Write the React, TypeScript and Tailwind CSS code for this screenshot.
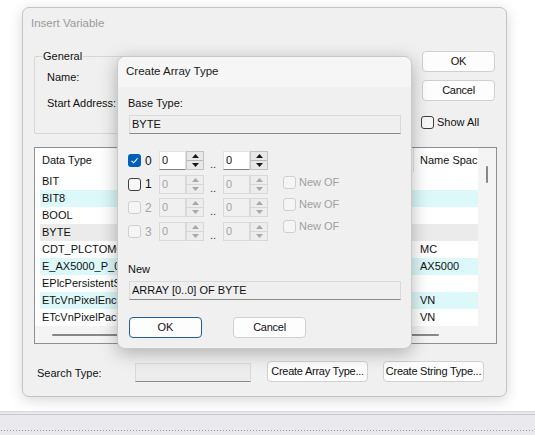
import React from "react";

type Row = { name: string; ns: string; tone?: "cyan" | "gray" };

const rows: Row[] = [
  { name: "BIT", ns: "" },
  { name: "BIT8", ns: "", tone: "cyan" },
  { name: "BOOL", ns: "" },
  { name: "BYTE", ns: "", tone: "gray" },
  { name: "CDT_PLCTOMC", ns: "MC" },
  { name: "E_AX5000_P_0", ns: "AX5000", tone: "cyan" },
  { name: "EPlcPersistentStatus", ns: "" },
  { name: "ETcVnPixelEncoding", ns: "VN", tone: "cyan" },
  { name: "ETcVnPixelPackMode", ns: "VN" },
];

function Check({ state }: { state: "on" | "off" | "disabled" }) {
  if (state === "on") {
    return (
      <span className="w-[13px] h-[13px] rounded-[3px] bg-[#005fb8] flex items-center justify-center shrink-0">
        <svg width="9" height="9" viewBox="0 0 9 9">
          <path d="M1.5 4.8 L3.6 6.8 L7.6 2.4" fill="none" stroke="white" strokeWidth="1.1" />
        </svg>
      </span>
    );
  }
  return (
    <span
      className={
        state === "off"
          ? "w-[13px] h-[13px] rounded-[3px] border border-[#3f3f3f] bg-[#f7f7f7] shrink-0"
          : "w-[13px] h-[13px] rounded-[3px] border border-[#cfcfcf] bg-[#f5f5f5] shrink-0"
      }
    />
  );
}

function Spin({ enabled }: { enabled: boolean }) {
  const arrow = enabled ? "#1a1a1a" : "#a8a8a8";
  return (
    <div className="flex h-[19px] w-[45px]">
      <div
        className={
          enabled
            ? "w-[27px] h-full bg-white border border-[#e2e2e2] border-b-[#7d7d7d] pl-[2px] leading-[17px]"
            : "w-[27px] h-full bg-[#f0f0f0] border border-[#dadada] pl-[2px] leading-[17px] text-[#a3a3a3]"
        }
      >
        0
      </div>
      <div
        className={
          enabled
            ? "w-[18px] h-full border border-[#c2c2c2] bg-[#e8e8e8] flex flex-col"
            : "w-[18px] h-full border border-[#d8d8d8] bg-[#ededed] flex flex-col"
        }
      >
        <div className="flex-1 flex items-center justify-center">
          <svg width="7" height="4" viewBox="0 0 7 4">
            <path d="M0 4 L3.5 0 L7 4 Z" fill={arrow} />
          </svg>
        </div>
        <div className={enabled ? "h-px bg-[#b5b5b5]" : "h-px bg-[#d6d6d6]"} />
        <div className="flex-1 flex items-center justify-center">
          <svg width="7" height="4" viewBox="0 0 7 4">
            <path d="M0 0 L7 0 L3.5 4 Z" fill={arrow} />
          </svg>
        </div>
      </div>
    </div>
  );
}

function Btn({ label, w, primary }: { label: string; w: string; primary?: boolean }) {
  return (
    <div
      className={
        primary
          ? `${w} h-[21px] rounded-[4px] border-[1.5px] border-[#1e5f96] bg-[#fdfdfd] flex items-center justify-center whitespace-nowrap`
          : `${w} h-[21px] rounded-[4px] border border-[#d0d0d0] bg-[#fdfdfd] flex items-center justify-center whitespace-nowrap tracking-[-0.25px]`
      }
    >
      {label}
    </div>
  );
}

export default function App() {
  return (
    <div className="w-[535px] h-[435px] bg-white relative overflow-hidden flex flex-col font-['Liberation_Sans',Arial,sans-serif] text-[11px] text-[#111]">
      <div className="pt-[7px] pl-[22px]">
        {/* Insert Variable */}
        <div className="w-[485px] h-[390px] rounded-[7px] border border-[#c4c4c4] bg-[#f0f0f0] shadow-[0_3px_14px_rgba(0,0,0,0.16)] flex flex-col">
          <div className="h-[30px] pl-[8px] pt-[8px] leading-[14px] text-[11.5px] text-[#9a9a9a]">
            Insert Variable
          </div>
          <div className="pl-[11px] pr-[9px] flex flex-col">
            <div className="flex mt-[13px]">
              <div className="flex-1 mt-[5px] h-[78px] border border-[#d6d6d6] rounded-[2px] relative pl-[12px] pt-[13px]">
                <span className="absolute left-[7px] -top-[8px] px-[1px] bg-[#f0f0f0] leading-[14px]">General</span>
                <div className="leading-[14px]">Name:</div>
                <div className="leading-[14px] mt-[12px]">Start Address:</div>
              </div>
              <div className="w-[73px] ml-[14px] mr-[2px] flex flex-col">
                <Btn label="OK" w="w-[73px]" />
                <div className="mt-[8px]">
                  <Btn label="Cancel" w="w-[73px]" />
                </div>
                <div className="mt-[14px] -ml-[1px] flex items-center gap-[3px] leading-[14px]">
                  <Check state="off" />
                  <span>Show All</span>
                </div>
              </div>
            </div>

            {/* type list */}
            <div className="mt-[13px] h-[197px] border border-[#8d8f93] bg-white flex flex-col">
              <div className="flex h-[178px]">
                <div className="flex-1 flex flex-col overflow-hidden">
                  <div className="h-[25px] flex items-center relative">
                    <span className="w-[378px] pl-[7px]">Data Type</span>
                    <span className="pl-[7px] whitespace-nowrap">Name Spac</span>
                    <span className="absolute left-[378px] top-0 h-[24px] w-px bg-[#e3e3e3]" />
                  </div>
                  {rows.map((r) => (
                    <div
                      key={r.name}
                      className={
                        r.tone === "cyan"
                          ? "h-[17px] ml-[5px] flex items-center bg-[#dcf8f8]"
                          : r.tone === "gray"
                            ? "h-[17px] ml-[5px] flex items-center bg-[#ebebeb]"
                            : "h-[17px] ml-[5px] flex items-center"
                      }
                    >
                      <span className="w-[378px] pl-[2px] whitespace-nowrap overflow-hidden">{r.name}</span>
                      <span className="pl-[2px] whitespace-nowrap">{r.ns}</span>
                    </div>
                  ))}
                </div>
                <div className="w-[18px] bg-[#f4f4f4] pt-[18px] flex justify-center">
                  <div className="w-[2px] h-[17px] bg-[#878787] rounded-full" />
                </div>
              </div>
              <div className="flex-1 bg-[#f4f4f4] flex items-center pl-[17px]">
                <div className="w-[387px] h-[2px] bg-[#878787] rounded-full" />
              </div>
            </div>

            {/* search row */}
            <div className="mt-[17px] flex items-start">
              <div className="w-[101px] pl-[3px] pt-[5px] leading-[14px]">Search Type:</div>
              <div className="w-[116px] h-[19px] mt-[2px] bg-[#ececec] border border-[#dadada] border-b-[#8a8a8a]" />
              <div className="ml-[16px]">
                <Btn label="Create Array Type..." w="w-[101px]" />
              </div>
              <div className="ml-[15px]">
                <Btn label="Create String Type..." w="w-[101px]" />
              </div>
            </div>
          </div>
        </div>
      </div>

      {/* taskbar-ish strip */}
      <div className="mt-auto h-[24px] bg-[#e9e9ee] border-t border-[#d5d5db] flex flex-col">
        <div className="mt-[2px] h-px bg-[#c6c6ce]" />
        <div className="mt-[14px] h-[4px] bg-[radial-gradient(circle,#9c9ca8_0.7px,transparent_0.9px)] bg-[length:3px_3px]" />
      </div>

      {/* Create Array Type dialog */}
      <div className="absolute left-[117px] top-[56px] w-[295px] h-[293px] rounded-[8px] border border-[#c9c9c9] bg-[#f0f0f0] shadow-[0_4px_18px_rgba(0,0,0,0.28)] flex flex-col overflow-hidden">
        <div className="h-[30px] bg-[#f6f6f6] pl-[8px] flex items-center text-[11.5px] text-[#1b1b1b]">
          Create Array Type
        </div>
        <div className="flex-1 pl-[10px] pt-[9px] flex flex-col">
          <div className="leading-[14px]">Base Type:</div>
          <div className="ml-[1px] mt-[5px] w-[272px] h-[19px] bg-[#efefef] border border-[#dadada] border-b-[#8a8a8a] pl-[2px] leading-[17px]">
            BYTE
          </div>

          <div className="mt-[17px] flex">
            <div className="flex flex-col gap-[4.7px]">
              {[0, 1, 2, 3].map((i) => (
                <div key={i} className="h-[19px] flex items-center">
                  <Check state={i === 0 ? "on" : i === 1 ? "off" : "disabled"} />
                  <span
                    className={
                      i < 2
                        ? "w-[18px] pl-[4px] text-[12px] leading-[14px]"
                        : "w-[18px] pl-[4px] text-[12px] leading-[14px] text-[#a3a3a3]"
                    }
                  >
                    {i}
                  </span>
                  <Spin enabled={i === 0} />
                  <span className="w-[19px] self-end pl-[6px] leading-[12px] text-[#333]">..</span>
                  <Spin enabled={i === 0} />
                </div>
              ))}
            </div>
            <div className="ml-[15px] pt-[23px] flex flex-col gap-[6px] text-[#a0a0a0]">
              {[1, 2, 3].map((i) => (
                <div key={i} className="h-[16px] flex items-center gap-[3px]">
                  <Check state="disabled" />
                  <span>New OF</span>
                </div>
              ))}
            </div>
          </div>

          <div className="mt-[21px] leading-[14px]">New</div>
          <div className="ml-[1px] mt-[5px] w-[272px] h-[19px] bg-[#efefef] border border-[#dadada] border-b-[#8a8a8a] pl-[2px] leading-[17px]">
            ARRAY [0..0] OF BYTE
          </div>

          <div className="mt-[17px] ml-[1px] flex gap-[31px]">
            <Btn label="OK" w="w-[73px]" primary />
            <Btn label="Cancel" w="w-[73px]" />
          </div>
        </div>
      </div>
    </div>
  );
}
